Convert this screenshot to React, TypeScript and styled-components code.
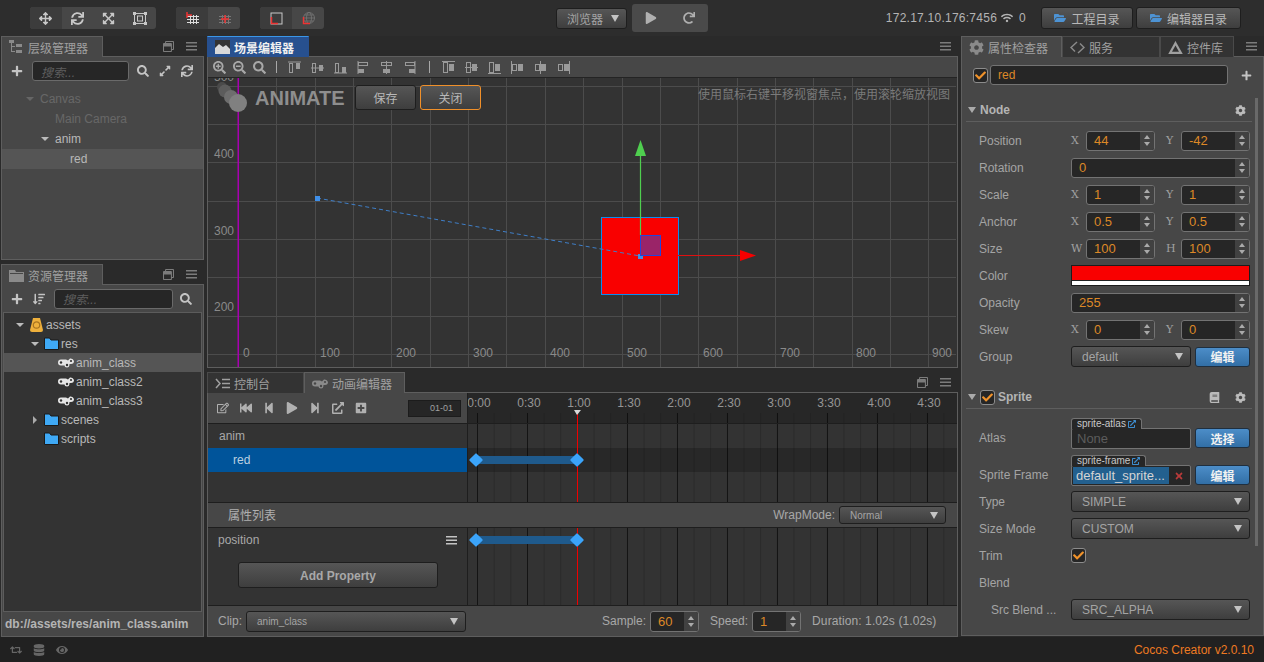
import React from 'react';
import styled, { createGlobalStyle, css } from 'styled-components';
import {
  FaArrowsAlt, FaSync, FaExpandArrowsAlt, FaPlus, FaSearch, FaSearchPlus, FaSearchMinus, FaExpandAlt, FaCog, FaFolderOpen,
  FaWifi, FaPlay, FaStepBackward, FaFastBackward, FaStepForward, FaRegEdit, FaExternalLinkAlt,
  FaPlusSquare, FaBook, FaTimes, FaRedo, FaEye, FaDatabase, FaRetweet, FaCheck, FaRegWindowRestore,
  FaSortAmountDown,
} from 'react-icons/fa';

const GlobalStyle = createGlobalStyle`
  html, body { margin: 0; padding: 0; background: #232323; overflow: hidden; }
  * { box-sizing: border-box; }
  body { font-family: "Liberation Sans", "Noto Sans CJK SC", sans-serif; font-size: 12px; color: #a8a8a8; }
`;

// Overall frame
const Page = styled.div`
  width: 1264px;
  height: 662px;
  display: flex;
  flex-direction: column;
  background: #2a2a2a;
`;

const TopBar = styled.div`
  height: 36px;
  display: flex;
  align-items: center;
  padding: 0 23px 0 30px;
  background: #2d2d2d;
`;

const ToolGroup = styled.div<{ $ml?: number }>`
  display: flex;
  height: 22px;
  margin-left: ${(p) => p.$ml || 0}px;
  border-radius: 3px;
  overflow: hidden;
  background: #474747;
`;

const ToolButton = styled.div<{ $dim?: boolean; $w?: number }>`
  width: ${(p) => p.$w || 32}px;
  display: flex;
  align-items: center;
  justify-content: center;
  color: #c8c8c8;
  font-size: 13px;
  background: ${(p) => (p.$dim ? '#3c3c3c' : 'transparent')};
`;

const PlayGroup = styled.div`
  width: 76px;
  height: 28px;
  margin-left: 5px;
  display: flex;
  border-radius: 3px;
  background: #4a4a4a;
`;

const PlayButton = styled.div`
  width: 38px;
  display: flex;
  align-items: center;
  justify-content: center;
  color: #b0b0b0;
  font-size: 12px;
`;

const IpText = styled.div`
  margin-left: auto;
  display: flex;
  align-items: center;
  gap: 4px;
  color: #b4b4b4;
  font-size: 12px;
  letter-spacing: 0.25px;
  svg { font-size: 12px; }
`;

const ConnCount = styled.span`
  margin-left: 2px;
`;

const GradientButton = styled.div<{ $w?: number; $h?: number; $ml?: number }>`
  ${(p) => p.$w && `width: ${p.$w}px;`}
  height: ${(p) => p.$h || 22}px;
  ${(p) => p.$ml && `margin-left: ${p.$ml}px;`}
  display: flex;
  flex-shrink: 0;
  align-items: center;
  justify-content: center;
  gap: 5px;
  border: 1px solid #1e1e1e;
  border-radius: 3px;
  color: #b8b8b8;
  background: linear-gradient(#565656, #3e3e3e);
`;

const BlueButton = styled(GradientButton)`
  color: #f2f2f2;
  font-weight: bold;
  background: linear-gradient(#4c8dc8, #326fa6);
  border-color: #1f2f3f;
`;

const Workspace = styled.div`
  flex: 1;
  display: flex;
  min-height: 0;
`;

const LeftColumn = styled.div`
  width: 204px;
  padding-left: 1px;
  display: flex;
  flex-direction: column;
  gap: 4px;
`;

const CenterColumn = styled.div`
  width: 751px;
  margin-left: 3px;
  display: flex;
  flex-direction: column;
  gap: 4px;
`;

const RightColumn = styled.div`
  width: 303px;
  margin-left: 3px;
  padding-bottom: 1px;
  display: flex;
  flex-direction: column;
`;

const Dock = styled.div<{ $h?: number }>`
  ${(p) => (p.$h ? `height: ${p.$h}px;` : 'flex: 1;')}
  display: flex;
  flex-direction: column;
  min-height: 0;
`;

const TabStrip = styled.div`
  height: 20px;
  display: flex;
  align-items: flex-end;
  flex-shrink: 0;
`;

const Tab = styled.div<{ $w: number; $kind?: 'active' | 'focus' | 'idle' }>`
  width: ${(p) => p.$w}px;
  height: 21px;
  display: flex;
  align-items: center;
  gap: 4px;
  padding-left: 7px;
  border: 1px solid #5e5e5e;
  border-bottom: none;
  font-size: 12px;
  color: #a0a0a0;
  background: #474747;
  margin-bottom: -1px;
  position: relative;
  z-index: 1;
  ${(p) =>
    p.$kind === 'focus' &&
    css`
      background: #27508f;
      color: #f0f0f0;
      font-weight: bold;
      border-color: #27508f;
      border-top: 1px solid #3a96e8;
    `}
  ${(p) =>
    p.$kind === 'idle' &&
    css`
      background: #333333;
      color: #a0a0a0;
      border-color: #4a4a4a;
    `}
`;

const TabActions = styled.div`
  margin-left: auto;
  height: 20px;
  display: flex;
  align-items: center;
  gap: 12px;
  padding-right: 7px;
  color: #7c7c7c;
  font-size: 11px;
`;

const Panel = styled.div`
  flex: 1;
  min-height: 0;
  display: flex;
  flex-direction: column;
  border: 1px solid #5e5e5e;
  background: #474747;
  position: relative;
`;

const PanelToolbar = styled.div<{ $h: number }>`
  height: ${(p) => p.$h}px;
  flex-shrink: 0;
  display: flex;
  align-items: center;
  padding-left: 9px;
  color: #c4c4c4;
  font-size: 12px;
`;

const SearchBox = styled.div<{ $w: number; $ml: number }>`
  width: ${(p) => p.$w}px;
  height: 20px;
  margin-left: ${(p) => p.$ml}px;
  margin-right: 8px;
  padding-left: 8px;
  display: flex;
  align-items: center;
  border: 1px solid #6a6a6a;
  border-radius: 3px;
  background: #262626;
  color: #5e5e5e;
  font-style: italic;
`;

const IconGap = styled.div<{ $w: number; $ml?: number }>`
  width: ${(p) => p.$w}px;
  margin-left: ${(p) => p.$ml || 0}px;
  display: flex;
  justify-content: center;
  flex-shrink: 0;
`;

// Trees
const TreeList = styled.div<{ $pt: number }>`
  flex: 1;
  padding-top: ${(p) => p.$pt}px;
`;

const AssetBox = styled(TreeList)`
  margin: 0 1px;
  border: 1px solid #5c5c5c;
  background: #333333;
`;

const TreeRow = styled.div<{ $h: number; $pad: number; $sel?: boolean; $dim?: boolean }>`
  height: ${(p) => p.$h}px;
  padding-left: ${(p) => p.$pad}px;
  display: flex;
  align-items: center;
  white-space: nowrap;
  color: ${(p) => (p.$dim ? '#676767' : '#b8b8b8')};
  background: ${(p) => (p.$sel ? '#555555' : 'transparent')};
`;

const CaretSlot = styled.span`
  width: 10px;
  flex-shrink: 0;
  display: flex;
  justify-content: center;
`;

const CaretLabel = styled.span`
  margin-left: 5px;
`;

const Caret = styled.span<{ $open?: boolean; $dim?: boolean }>`
  display: block;
  ${(p) =>
    p.$open
      ? `border-left: 4px solid transparent; border-right: 4px solid transparent; border-top: 4px solid ${p.$dim ? '#666' : '#bbb'};`
      : `border-top: 4px solid transparent; border-bottom: 4px solid transparent; border-left: 4px solid #aaa;`}
`;

const IconSlot = styled.span`
  width: 21px;
  height: 16px;
  flex-shrink: 0;
  display: flex;
  align-items: center;
  justify-content: flex-end;
  padding-right: 2px;
`;

const PathBar = styled.div`
  height: 24px;
  padding-left: 3px;
  display: flex;
  align-items: center;
  font-weight: bold;
  color: #b4b4b4;
  flex-shrink: 0;
`;

// Scene editor
const SceneBar = styled.div`
  height: 21px;
  flex-shrink: 0;
  display: flex;
  align-items: center;
  padding-left: 1px;
  border-bottom: 1px solid #242424;
  color: #a8a8a8;
  font-size: 13px;
`;

const SceneTool = styled.div`
  width: 20px;
  display: flex;
  justify-content: center;
`;

const AlignTool = styled.div`
  width: 23px;
  display: flex;
  justify-content: center;
`;

const BarDivider = styled.div<{ $ml: number; $mr: number }>`
  width: 1px;
  height: 12px;
  margin: 0 ${(p) => p.$mr}px 0 ${(p) => p.$ml}px;
  background: #a8a8a8;
`;

const SceneView = styled.div`
  flex: 1;
  position: relative;
  overflow: hidden;
  background: #333333;
  svg { display: block; }
`;

const AnimateOverlay = styled.div`
  position: absolute;
  left: 47px;
  top: 7px;
  display: flex;
  align-items: center;
`;

const AnimateTitle = styled.div`
  font-size: 20px;
  font-weight: bold;
  color: #8e8e8e;
  width: 100px;
  padding-top: 2px;
`;

const OverlayButton = styled(GradientButton)<{ $orange?: boolean }>`
  width: 61px;
  height: 25px;
  margin-right: 4px;
  font-size: 12px;
  ${(p) => p.$orange && 'border-color: #f0902a;'}
`;

const SceneHint = styled.div`
  position: absolute;
  right: 7px;
  top: 7px;
  color: #7a7a7a;
  font-size: 12px;
`;

// Animation editor
const TrackBlock = styled.div<{ $h: number }>`
  height: ${(p) => p.$h}px;
  flex-shrink: 0;
  display: flex;
  border-bottom: 1px solid #1e1e1e;
`;

const TrackSide = styled.div`
  width: 260px;
  flex-shrink: 0;
  display: flex;
  flex-direction: column;
  background: #333333;
  border-right: 1px solid #1e1e1e;
`;

const AnimBar = styled.div`
  height: 31px;
  flex-shrink: 0;
  display: flex;
  align-items: center;
  padding-left: 3px;
  background: #474747;
  border-bottom: 1px solid #1e1e1e;
  color: #b0b0b0;
  font-size: 12px;
`;

const AnimTool = styled.div`
  width: 23px;
  display: flex;
  justify-content: center;
`;

const FrameBox = styled.div`
  width: 53px;
  height: 17px;
  margin-left: 36px;
  padding-right: 7px;
  display: flex;
  align-items: center;
  justify-content: flex-end;
  font-size: 9px;
  color: #a0a0a0;
  background: #262626;
  border: 1px solid #1c1c1c;
`;

const NodeRow = styled.div<{ $pad: number; $sel?: boolean }>`
  height: 24px;
  padding-left: ${(p) => p.$pad}px;
  display: flex;
  align-items: center;
  color: ${(p) => (p.$sel ? '#bcd0e0' : '#a8a8a8')};
  background: ${(p) => (p.$sel ? '#00549a' : 'transparent')};
`;

const Timeline = styled.div`
  flex: 1;
  position: relative;
  overflow: hidden;
  display: flex;
  flex-direction: column;
`;

const gridLines = css`
  background-color: #333333;
  background-image: linear-gradient(90deg, #141414 1px, transparent 1px), linear-gradient(90deg, #2a2a2a 1px, transparent 1px);
  background-size: 50px 100%, 16.667px 100%;
  background-position: 9px 0, 9px 0;
`;

const Ruler = styled.div`
  height: 31px;
  flex-shrink: 0;
  background: #272727;
  border-bottom: 1px solid #1e1e1e;
  display: flex;
  flex-direction: column;
`;

const RulerLabels = styled.div`
  height: 20px;
  margin-left: -14px;
  display: flex;
  align-items: center;
`;

const RulerLabel = styled.div`
  width: 50px;
  flex-shrink: 0;
  text-align: center;
  color: #969696;
  font-size: 12px;
`;

const RulerTicks = styled.div`
  flex: 1;
  background-image: linear-gradient(90deg, #101010 1px, transparent 1px), linear-gradient(90deg, #222 1px, transparent 1px);
  background-size: 50px 100%, 16.667px 100%;
  background-position: 9px 0, 9px 0;
`;

const Lane = styled.div`
  flex: 1;
  ${gridLines}
`;

const SelectedLane = styled.div`
  height: 24px;
  margin-top: 24px;
  background: rgba(0, 0, 0, 0.2);
`;

const Playhead = styled.div<{ $top: number }>`
  position: absolute;
  left: 109px;
  top: ${(p) => p.$top}px;
  bottom: 0;
  width: 1px;
  background: #f00000;
`;

const PlayheadCap = styled.div`
  position: absolute;
  left: 106px;
  top: 17px;
  border-left: 3px solid transparent;
  border-right: 4px solid transparent;
  border-top: 5px solid #d8d8d8;
`;

const KeySpan = styled.div<{ $top: number }>`
  position: absolute;
  left: 8px;
  top: ${(p) => p.$top}px;
  width: 101px;
  height: 8px;
  background: #1f5a8c;
`;

const KeyDiamond = styled.div<{ $right?: boolean }>`
  position: absolute;
  top: -1px;
  ${(p) => (p.$right ? 'right: -5px;' : 'left: -5px;')}
  width: 10px;
  height: 10px;
  border-radius: 1px;
  transform: rotate(45deg);
  background: #3ba4fa;
`;

const PropHeader = styled.div`
  height: 25px;
  flex-shrink: 0;
  display: flex;
  align-items: center;
  padding-left: 20px;
  border-bottom: 1px solid #1e1e1e;
  color: #b0b0b0;
`;

const PropTitle = styled.span`
  margin-top: -2px;
`;

const WrapLabel = styled.div`
  margin-left: auto;
  margin-right: 4px;
  color: #a8a8a8;
`;

const Select = styled(GradientButton)<{ $w?: number; $h?: number; $mr?: number; $small?: boolean }>`
  width: ${(p) => p.$w || 179}px;
  height: ${(p) => p.$h || 21}px;
  margin-right: ${(p) => p.$mr || 0}px;
  justify-content: space-between;
  padding: 0 7px 0 10px;
  font-size: ${(p) => (p.$small ? 10 : 12)}px;
  color: #a4a4a4;
  flex-shrink: 0;
`;

const DropArrow = styled.span`
  border-left: 4px solid transparent;
  border-right: 4px solid transparent;
  border-top: 7px solid #c4c4c4;
`;

const PropRow = styled.div`
  height: 24px;
  padding: 0 10px 0 10px;
  display: flex;
  align-items: center;
  justify-content: space-between;
  color: #a8a8a8;
  svg { color: #c4c4c4; }
`;

const AddButton = styled(GradientButton)`
  width: 200px;
  height: 26px;
  margin: 10px 0 0 30px;
  padding-top: 2px;
  font-weight: bold;
  color: #a8a8a8;
`;

const AnimFooter = styled.div`
  flex: 1;
  display: flex;
  align-items: center;
  padding-left: 10px;
  color: #a8a8a8;
`;

const FooterGroup = styled.div<{ $ml: number }>`
  margin-left: ${(p) => p.$ml}px;
  display: flex;
  align-items: center;
  gap: 4px;
`;

const DurationText = styled(FooterGroup)`
  letter-spacing: 0.1px;
`;

const NumberBox = styled.div<{ $w: number; $h?: number }>`
  width: ${(p) => p.$w}px;
  height: ${(p) => p.$h || 20}px;
  flex-shrink: 0;
  display: flex;
  border: 1px solid #737373;
  border-radius: 3px;
  background: #262626;
  overflow: hidden;
`;

const NumberValue = styled.div`
  flex: 1;
  padding-left: 7px;
  display: flex;
  align-items: center;
  font-size: 13px;
  color: #dd8826;
`;

const Spinner = styled.div`
  width: 14px;
  display: flex;
  flex-direction: column;
  justify-content: center;
  align-items: center;
  gap: 3px;
  background: #414141;
`;

const SpinUp = styled.span`
  border-left: 3px solid transparent;
  border-right: 3px solid transparent;
  border-bottom: 4px solid #aaa;
`;

const SpinDown = styled.span`
  border-left: 3px solid transparent;
  border-right: 3px solid transparent;
  border-top: 4px solid #aaa;
`;

// Inspector
const NameRow = styled.div`
  height: 38px;
  flex-shrink: 0;
  display: flex;
  align-items: center;
  padding-left: 11px;
  padding-bottom: 2px;
`;

const CheckBox = styled.div<{ $mr?: number }>`
  width: 15px;
  height: 15px;
  margin-right: ${(p) => p.$mr || 0}px;
  flex-shrink: 0;
  display: flex;
  align-items: center;
  justify-content: center;
  border: 1px solid #8c8c8c;
  border-radius: 3px;
  background: #262626;
  color: #f0922a;
  font-size: 11px;
`;

const NameInput = styled.div`
  width: 238px;
  height: 20px;
  margin-left: 2px;
  padding-left: 7px;
  display: flex;
  align-items: center;
  border: 1px solid #737373;
  border-radius: 3px;
  background: #262626;
  color: #dd8826;
  font-size: 12px;
`;

const NamePlus = styled.div`
  margin-left: 13px;
  color: #c4c4c4;
  font-size: 11px;
  display: flex;
`;

const SectionHead = styled.div<{ $mt: number }>`
  height: 25px;
  margin: ${(p) => p.$mt}px 11px 0 4px;
  padding: 2px 6px 0 0;
  display: flex;
  align-items: center;
  border-bottom: 1px solid #5e5e5e;
  font-weight: bold;
  color: #b4b4b4;
  flex-shrink: 0;
`;

const HeadIcons = styled.div`
  margin-left: auto;
  display: flex;
  align-items: center;
  gap: 15px;
  color: #bbbbbb;
  font-size: 11px;
`;

const HeadCaret = styled.span`
  margin: 0 4px 0 2px;
  border-left: 4px solid transparent;
  border-right: 4px solid transparent;
  border-top: 6px solid #aaa;
`;

const SectionBody = styled.div<{ $mt: number }>`
  margin-top: ${(p) => p.$mt}px;
  flex-shrink: 0;
`;

const PropLine = styled.div<{ $tall?: boolean }>`
  height: ${(p) => (p.$tall ? 37 : 27)}px;
  padding-left: 17px;
  display: flex;
  align-items: ${(p) => (p.$tall ? 'flex-end' : 'center')};
`;

const PropLabel = styled.div<{ $indent?: boolean; $tall?: boolean }>`
  width: 92px;
  flex-shrink: 0;
  color: #a4a4a4;
  white-space: nowrap;
  ${(p) => p.$indent && 'padding-left: 12px;'}
  ${(p) => p.$tall && 'height: 21px; line-height: 21px;'}
`;

const Axis = styled.div`
  width: 15px;
  flex-shrink: 0;
  font-family: "DejaVu Serif", serif;
  font-size: 11px;
  color: #a0a0a0;
`;

const AxisGap = styled.div`
  width: 11px;
  flex-shrink: 0;
`;

const ColorBar = styled.div`
  width: 179px;
  height: 21px;
  display: flex;
  flex-direction: column;
  border: 1px solid #1c1c1c;
  background: #f90000;
`;

const ColorAlpha = styled.div`
  margin-top: auto;
  height: 5px;
  background: #ffffff;
  border-top: 1px solid #222;
`;

const SideButton = styled(BlueButton)<{ $raise?: boolean }>`
  width: 55px;
  height: 20px;
  margin-left: 4px;
  ${(p) => p.$raise && 'margin-bottom: 1px;'}
`;

const AssetField = styled.div`
  width: 120px;
  height: 21px;
  position: relative;
  flex-shrink: 0;
  display: flex;
  align-items: center;
  padding: 1px;
  border: 1px solid #737373;
  border-radius: 2px;
  background: #262626;
  color: #5c5c5c;
  font-size: 13px;
`;

const AssetNone = styled.span`
  padding-left: 4px;
`;

const AssetTag = styled.div`
  position: absolute;
  left: -1px;
  top: -11px;
  height: 11px;
  padding: 0 5px 0 5px;
  display: flex;
  align-items: center;
  gap: 2px;
  line-height: 10px;
  border: 1px solid #737373;
  border-bottom: none;
  border-radius: 3px 3px 0 0;
  background: #262626;
  color: #c8c8c8;
  font-size: 10px;
  svg { color: #3e8ed0; font-size: 8px; }
`;

const AssetValue = styled.div`
  width: 96px;
  height: 100%;
  padding-left: 3px;
  display: flex;
  align-items: center;
  background: #23608f;
  color: #d4d4d4;
  font-size: 13px;
  white-space: nowrap;
  overflow: hidden;
`;

const AssetClear = styled.div`
  flex: 1;
  display: flex;
  justify-content: center;
  color: #b83a3a;
  font-size: 10px;
`;

const ScrollThumb = styled.div`
  position: absolute;
  right: 5px;
  top: 41px;
  width: 3px;
  height: 448px;
  background: #696969;
`;

const StatusBar = styled.div`
  height: 25px;
  flex-shrink: 0;
  display: flex;
  align-items: center;
  padding: 0 10px;
  gap: 11px;
  color: #666666;
  font-size: 12px;
  background: #212121;
`;

const VersionText = styled.div`
  margin-left: auto;
  color: #ee7a22;
  font-size: 12px;
`;

const FolderBtnIcon = styled.span`
  color: #4d93d4;
  display: flex;
  font-size: 12px;
`;

// Drawn icons
const AnimIcon = ({ c = '#e6e6e6', hole = '#333' }: { c?: string; hole?: string }) => (
  <svg width="16" height="11" viewBox="0 0 16 11">
    <path d="M0 5.5 Q0 2.5 3 2.5 H8 L10 3.5 L12 1.5 Q15 1 16 4 Q16 7 13 7 L11.5 7 Q11.5 10.5 9 10.5 Q6.5 10.5 6.5 8.5 H3 Q0 8.5 0 5.5Z" fill={c} />
    <circle cx="3" cy="5.5" r="1.2" fill={hole} />
    <circle cx="9" cy="8" r="1.2" fill={hole} />
    <circle cx="13" cy="4" r="1.1" fill={hole} />
  </svg>
);

const FolderIcon = () => (
  <svg width="15" height="13" viewBox="0 0 15 13">
    <path d="M0.5 1 H5.5 L7 3 H14.5 V12.5 H0.5Z" fill="#3fa9f5" stroke="#1a1a1a" strokeWidth="1" />
  </svg>
);

const AssetsIcon = () => (
  <svg width="15" height="16" viewBox="0 0 15 16">
    <path d="M4 1 H11 L14 13 Q14 15 12 15 H3 Q1 15 1 13Z" fill="#eeb03c" />
    <circle cx="7.5" cy="8" r="3.2" fill="none" stroke="#a87420" strokeWidth="1.2" />
  </svg>
);

const HierarchyIcon = () => (
  <svg width="15" height="14" viewBox="0 0 15 14" fill="#8a8a8a">
    <rect x="0" y="0" width="5" height="3" />
    <rect x="2" y="3" width="1" height="9" />
    <rect x="3" y="6" width="3" height="1" />
    <rect x="3" y="11" width="3" height="1" />
    <rect x="7" y="4" width="6" height="3" />
    <rect x="7" y="10" width="6" height="3" />
  </svg>
);

const PanelFolderIcon = () => (
  <svg width="15" height="13" viewBox="0 0 15 13" fill="#8a8a8a">
    <path d="M0 1 H6 L7 3 H15 V13 H0Z" />
    <rect x="1" y="4" width="13" height="1" fill="#474747" />
  </svg>
);

const SceneIcon = () => (
  <svg width="15" height="14" viewBox="0 0 15 14">
    <rect x="0" y="0" width="15" height="14" fill="#333" />
    <path d="M0 14 V8 L4 4 L8 7 L11 5 L15 9 V14Z" fill="#d8d8d8" />
  </svg>
);

const ServiceIcon = () => (
  <svg width="15" height="13" viewBox="0 0 15 13" fill="none" stroke="#8a8a8a" strokeWidth="1.5">
    <path d="M7 1 L1 6.5 L5 10.5" />
    <path d="M8 12 L14 6.5 L10 2.5" />
  </svg>
);

const TriangleIcon = () => (
  <svg width="15" height="13" viewBox="0 0 12 12" fill="none" stroke="#a0a0a0" strokeWidth="2">
    <path d="M6 2 L11 11 H1Z" />
  </svg>
);

const ConsoleIcon = () => (
  <svg width="15" height="11" viewBox="0 0 15 11" fill="none" stroke="#a0a0a0" strokeWidth="1.5">
    <path d="M1 1 L5 5.5 L1 10" />
    <path d="M7 1.5 H15 M7 5.5 H15 M7 9.5 H15" />
  </svg>
);

const MenuIcon = ({ c = '#7c7c7c' }: { c?: string }) => (
  <svg width="11" height="9" viewBox="0 0 11 9" fill={c}>
    <rect y="0" width="11" height="1.5" />
    <rect y="3.5" width="11" height="1.5" />
    <rect y="7" width="11" height="1.5" />
  </svg>
);

type Glyph = 'corner' | 'center';

const GridPivot = ({ mark }: { mark: Glyph }) => (
  <svg width="13" height="12" viewBox="0 0 13 12">
    <g stroke={mark === 'corner' ? '#dddddd' : '#777'} strokeWidth="1" fill="none">
      <path d="M1 4.5 H13 M1 7.5 H13 M1 10.5 H13 M4.5 3 V12 M7.5 3 V12 M10.5 3 V12" />
    </g>
    {mark === 'corner' ? (
      <path d="M1 0 V6 M1 3 H6" stroke="#e33" strokeWidth="1.5" fill="none" />
    ) : (
      <path d="M7 3 V11 M3 7 H11" stroke="#e33" strokeWidth="1.5" fill="none" />
    )}
  </svg>
);

const SpacePivot = ({ globe }: { globe?: boolean }) => (
  <svg width="13" height="13" viewBox="0 0 13 13" fill="none">
    {globe ? (
      <g stroke="#777" strokeWidth="0.8">
        <circle cx="7" cy="6" r="5.5" />
        <ellipse cx="7" cy="6" rx="2.5" ry="5.5" />
        <path d="M1.5 6 H12.5 M2.5 3 H11.5 M2.5 9 H11.5" />
      </g>
    ) : (
      <rect x="1" y="1" width="11" height="11" stroke="#c8c8c8" />
    )}
    <path d="M1.5 5 V11.5 H8" stroke="#ee3333" strokeWidth="1.5" />
  </svg>
);

const RectTool = () => (
  <svg width="14" height="13" viewBox="0 0 14 13" fill="none" stroke="#c8c8c8">
    <rect x="1.5" y="1.5" width="11" height="10" />
    <rect x="4.5" y="4" width="5" height="5" />
    <rect x="0" y="0" width="3" height="3" fill="#c8c8c8" stroke="none" />
    <rect x="11" y="0" width="3" height="3" fill="#c8c8c8" stroke="none" />
    <rect x="0" y="10" width="3" height="3" fill="#c8c8c8" stroke="none" />
    <rect x="11" y="10" width="3" height="3" fill="#c8c8c8" stroke="none" />
  </svg>
);

type AlignKind = 'top' | 'vmid' | 'bottom' | 'left' | 'hmid' | 'right';

const ALIGN_SPEC: Record<AlignKind, { line: string; a: number[]; b: number[] }> = {
  top: { line: 'M0 1 H13', a: [1, 2, 4, 10], b: [8, 2, 4, 6] },
  vmid: { line: 'M0 7 H13', a: [1, 2, 4, 10], b: [8, 4, 4, 6] },
  bottom: { line: 'M0 12 H13', a: [1, 2, 4, 10], b: [8, 6, 4, 6] },
  left: { line: 'M1 0 V13', a: [1, 1, 10, 4], b: [1, 8, 6, 4] },
  hmid: { line: 'M6.5 0 V13', a: [1, 1, 11, 4], b: [3, 8, 7, 4] },
  right: { line: 'M12 0 V13', a: [2, 1, 10, 4], b: [6, 8, 6, 4] },
};

const AlignIcon = ({ kind }: { kind: AlignKind }) => {
  const s = ALIGN_SPEC[kind];
  return (
    <svg width="13" height="13" viewBox="0 0 13 13" fill="none" stroke="#9a9a9a">
      <path d={s.line} />
      <rect x={s.a[0] + 0.5} y={s.a[1] + 0.5} width={s.a[2] - 1} height={s.a[3] - 1} />
      <rect x={s.b[0]} y={s.b[1]} width={s.b[2]} height={s.b[3]} fill="#9a9a9a" stroke="none" />
    </svg>
  );
};

// second row of the scene toolbar: distribution, a bar split by a guide
const DistributeIcon = ({ vertical, at }: { vertical?: boolean; at: number }) => (
  <svg width="13" height="13" viewBox="0 0 13 13" fill="none" stroke="#9a9a9a">
    {vertical ? (
      <>
        <path d={`M0 ${at}.5 H13`} />
        <rect x="1.5" y="1.5" width="4" height="10" />
        <rect x="7.5" y="3.5" width="4" height="6" fill="#9a9a9a" />
      </>
    ) : (
      <>
        <path d={`M${at}.5 0 V13`} />
        <rect x="1.5" y="3.5" width="4" height="6" />
        <rect x="7.5" y="3.5" width="4" height="6" fill="#9a9a9a" />
      </>
    )}
  </svg>
);

// Scene drawing, in page coordinates
const GRID_X = Array.from({ length: 20 }, (_, i) => 238 + i * 38.35);
const GRID_Y = Array.from({ length: 8 }, (_, i) => 85.7 + i * 38.3);
const X_LABELS = [[243, '0'], [320, '100'], [396, '200'], [473, '300'], [550, '400'], [627, '500'], [703, '600'], [780, '700'], [856, '800'], [932, '900']] as const;
const Y_LABELS = [[81, '500'], [158, '400'], [235, '300'], [311, '200']] as const;

const SceneDrawing = () => (
  <svg width="748" height="289" viewBox="208 78 748 289">
    {GRID_X.map((x) => (
      <line key={x} x1={Math.round(x) + 0.5} x2={Math.round(x) + 0.5} y1="78" y2="367" stroke="#4c4c4c" />
    ))}
    {GRID_Y.map((y) => (
      <line key={y} y1={Math.round(y) + 0.5} y2={Math.round(y) + 0.5} x1="208" x2="956" stroke="#4c4c4c" />
    ))}
    <rect x="237.5" y="78" width="1.5" height="289" fill="#a800b0" />
    <g fill="#8a8a8a" fontSize="12" fontFamily="Liberation Sans">
      {X_LABELS.map(([x, t]) => (
        <text key={t} x={x} y="357">{t}</text>
      ))}
      {Y_LABELS.map(([y, t]) => (
        <text key={t} x="214" y={y}>{t}</text>
      ))}
    </g>
    <circle cx="222" cy="87" r="5" fill="#4a4a4a" />
    <circle cx="225" cy="91" r="6.5" fill="#5c5c5c" />
    <circle cx="231" cy="97" r="7" fill="#6e6e6e" />
    <circle cx="238" cy="103" r="9" fill="#808080" />
    <rect x="601.5" y="217.5" width="77" height="77" fill="#f90000" stroke="#0a8cf0" />
    <line x1="317" y1="198" x2="640" y2="256" stroke="#3f7fc8" strokeDasharray="4 3" />
    <rect x="315" y="196" width="5" height="5" fill="#3f8fe8" />
    <rect x="638" y="254" width="5" height="5" fill="#3f8fe8" />
    <rect x="640.5" y="235.5" width="20" height="20" fill="#9a2468" stroke="#2244dd" />
    <line x1="640.5" y1="155" x2="640.5" y2="235" stroke="#4fcf4f" strokeWidth="1.2" />
    <polygon points="640.5,140 635,156 646,156" fill="#4fcf4f" />
    <line x1="678" y1="255.5" x2="741" y2="255.5" stroke="#e01010" />
    <polygon points="756,255.5 740,250 740,261" fill="#f80000" />
  </svg>
);

const ALIGN_KINDS: AlignKind[] = ['top', 'vmid', 'bottom', 'left', 'hmid', 'right'];
const DISTRIBUTE: { vertical?: boolean; at: number }[] = [
  { vertical: true, at: 0 },
  { vertical: true, at: 6 },
  { vertical: true, at: 12 },
  { at: 0 },
  { at: 6 },
  { at: 12 },
];
const TIME_LABELS = ['0:00', '0:30', '1:00', '1:30', '2:00', '2:30', '3:00', '3:30', '4:00', '4:30', '5:00'];

const NumberField = ({ value, w, h }: { value: string; w: number; h?: number }) => (
  <NumberBox $w={w} $h={h}>
    <NumberValue>{value}</NumberValue>
    <Spinner>
      <SpinUp />
      <SpinDown />
    </Spinner>
  </NumberBox>
);

const PairLine = ({ label, a, b, x = 'X', y = 'Y' }: { label: string; a: string; b: string; x?: string; y?: string }) => (
  <PropLine>
    <PropLabel>{label}</PropLabel>
    <Axis>{x}</Axis>
    <NumberField value={a} w={69} />
    <AxisGap />
    <Axis>{y}</Axis>
    <NumberField value={b} w={69} />
  </PropLine>
);

const SelectLine = ({ label, value, indent }: { label: string; value: string; indent?: boolean }) => (
  <PropLine>
    <PropLabel $indent={indent}>{label}</PropLabel>
    <Select>
      {value}
      <DropArrow />
    </Select>
  </PropLine>
);

const PanelMenu = () => (
  <TabActions>
    <FaRegWindowRestore />
    <MenuIcon />
  </TabActions>
);

const App: React.FC = () => {
  return (
    <Page>
      <GlobalStyle />
      <TopBar>
        <ToolGroup>
          <ToolButton $dim $w={31.5}><FaArrowsAlt /></ToolButton>
          <ToolButton $w={31.5}><FaSync /></ToolButton>
          <ToolButton $w={31.5}><FaExpandArrowsAlt /></ToolButton>
          <ToolButton $w={31.5}><RectTool /></ToolButton>
        </ToolGroup>
        <ToolGroup $ml={20}>
          <ToolButton $dim><GridPivot mark="corner" /></ToolButton>
          <ToolButton><GridPivot mark="center" /></ToolButton>
        </ToolGroup>
        <ToolGroup $ml={20}>
          <ToolButton $dim><SpacePivot /></ToolButton>
          <ToolButton><SpacePivot globe /></ToolButton>
        </ToolGroup>
        <Select $w={71} $h={21} $ml={232}>
          浏览器
          <DropArrow />
        </Select>
        <PlayGroup>
          <PlayButton><FaPlay /></PlayButton>
          <PlayButton><FaRedo /></PlayButton>
        </PlayGroup>
        <IpText>
          172.17.10.176:7456 <FaWifi /> <ConnCount>0</ConnCount>
        </IpText>
        <GradientButton $w={92} $ml={15}>
          <FolderBtnIcon><FaFolderOpen /></FolderBtnIcon>工程目录
        </GradientButton>
        <GradientButton $w={105} $ml={3}>
          <FolderBtnIcon><FaFolderOpen /></FolderBtnIcon>编辑器目录
        </GradientButton>
      </TopBar>

      <Workspace>
        <LeftColumn>
          <Dock $h={224}>
            <TabStrip>
              <Tab $w={102} $kind="active"><HierarchyIcon />层级管理器</Tab>
              <PanelMenu />
            </TabStrip>
            <Panel>
              <PanelToolbar $h={28}>
                <FaPlus />
                <SearchBox $w={97} $ml={9}>搜索...</SearchBox>
                <IconGap $w={12}><FaSearch /></IconGap>
                <IconGap $w={32}><FaExpandAlt /></IconGap>
                <IconGap $w={12}><FaSync /></IconGap>
              </PanelToolbar>
              <TreeList $pt={4}>
                <TreeRow $h={20} $pad={23} $dim><CaretSlot><Caret $open $dim /></CaretSlot><CaretLabel>Canvas</CaretLabel></TreeRow>
                <TreeRow $h={20} $pad={53} $dim>Main Camera</TreeRow>
                <TreeRow $h={20} $pad={38}><CaretSlot><Caret $open /></CaretSlot><CaretLabel>anim</CaretLabel></TreeRow>
                <TreeRow $h={20} $pad={68} $sel>red</TreeRow>
              </TreeList>
            </Panel>
          </Dock>
          <Dock>
            <TabStrip>
              <Tab $w={102} $kind="active"><PanelFolderIcon />资源管理器</Tab>
              <PanelMenu />
            </TabStrip>
            <Panel>
              <PanelToolbar $h={27}>
                <FaPlus />
                <IconGap $w={32}><FaSortAmountDown /></IconGap>
                <SearchBox $w={119} $ml={-1}>搜索...</SearchBox>
                <IconGap $w={12} $ml={-1}><FaSearch /></IconGap>
              </PanelToolbar>
              <AssetBox $pt={2}>
                <TreeRow $h={19} $pad={11}><CaretSlot><Caret $open /></CaretSlot><IconSlot><AssetsIcon /></IconSlot>assets</TreeRow>
                <TreeRow $h={19} $pad={26}><CaretSlot><Caret $open /></CaretSlot><IconSlot><FolderIcon /></IconSlot>res</TreeRow>
                <TreeRow $h={19} $pad={41} $sel><CaretSlot /><IconSlot><AnimIcon /></IconSlot>anim_class</TreeRow>
                <TreeRow $h={19} $pad={41}><CaretSlot /><IconSlot><AnimIcon /></IconSlot>anim_class2</TreeRow>
                <TreeRow $h={19} $pad={41}><CaretSlot /><IconSlot><AnimIcon /></IconSlot>anim_class3</TreeRow>
                <TreeRow $h={19} $pad={26}><CaretSlot><Caret /></CaretSlot><IconSlot><FolderIcon /></IconSlot>scenes</TreeRow>
                <TreeRow $h={19} $pad={26}><CaretSlot /><IconSlot><FolderIcon /></IconSlot>scripts</TreeRow>
              </AssetBox>
              <PathBar>db://assets/res/anim_class.anim</PathBar>
            </Panel>
          </Dock>
        </LeftColumn>

        <CenterColumn>
          <Dock $h={332}>
            <TabStrip>
              <Tab $w={102} $kind="focus"><SceneIcon />场景编辑器</Tab>
              <TabActions><MenuIcon /></TabActions>
            </TabStrip>
            <Panel>
              <SceneBar>
                <SceneTool><FaSearchPlus /></SceneTool>
                <SceneTool><FaSearchMinus /></SceneTool>
                <SceneTool><FaSearch /></SceneTool>
                <BarDivider $ml={7} $mr={6} />
                {ALIGN_KINDS.map((k) => (
                  <AlignTool key={k}><AlignIcon kind={k} /></AlignTool>
                ))}
                <BarDivider $ml={8} $mr={7} />
                {DISTRIBUTE.map((d) => (
                  <AlignTool key={`${d.vertical}-${d.at}`}><DistributeIcon vertical={d.vertical} at={d.at} /></AlignTool>
                ))}
              </SceneBar>
              <SceneView>
                <SceneDrawing />
                <AnimateOverlay>
                  <AnimateTitle>ANIMATE</AnimateTitle>
                  <OverlayButton>保存</OverlayButton>
                  <OverlayButton $orange>关闭</OverlayButton>
                </AnimateOverlay>
                <SceneHint>使用鼠标右键平移视窗焦点，使用滚轮缩放视图</SceneHint>
              </SceneView>
            </Panel>
          </Dock>
          <Dock>
            <TabStrip>
              <Tab $w={97} $kind="idle"><ConsoleIcon />控制台</Tab>
              <Tab $w={101} $kind="active"><AnimIcon c="#8a8a8a" hole="#474747" />动画编辑器</Tab>
              <PanelMenu />
            </TabStrip>
            <Panel>
              <TrackBlock $h={110}>
                <TrackSide>
                  <AnimBar>
                    <AnimTool><FaRegEdit /></AnimTool>
                    <AnimTool><FaFastBackward /></AnimTool>
                    <AnimTool><FaStepBackward /></AnimTool>
                    <AnimTool><FaPlay /></AnimTool>
                    <AnimTool><FaStepForward /></AnimTool>
                    <AnimTool><FaExternalLinkAlt /></AnimTool>
                    <AnimTool><FaPlusSquare /></AnimTool>
                    <FrameBox>01-01</FrameBox>
                  </AnimBar>
                  <NodeRow $pad={11}>anim</NodeRow>
                  <NodeRow $pad={25} $sel>red</NodeRow>
                </TrackSide>
                <Timeline>
                  <Ruler>
                    <RulerLabels>
                      {TIME_LABELS.map((t) => (
                        <RulerLabel key={t}>{t}</RulerLabel>
                      ))}
                    </RulerLabels>
                    <RulerTicks />
                  </Ruler>
                  <Lane>
                    <SelectedLane />
                  </Lane>
                  <Playhead $top={20} />
                  <PlayheadCap />
                  <KeySpan $top={63}>
                    <KeyDiamond />
                    <KeyDiamond $right />
                  </KeySpan>
                </Timeline>
              </TrackBlock>
              <PropHeader>
                <PropTitle>属性列表</PropTitle>
                <WrapLabel>WrapMode:</WrapLabel>
                <Select $w={107} $h={18} $mr={11} $small>
                  Normal
                  <DropArrow />
                </Select>
              </PropHeader>
              <TrackBlock $h={78}>
                <TrackSide>
                  <PropRow>
                    position
                    <MenuIcon c="#c4c4c4" />
                  </PropRow>
                  <AddButton>Add Property</AddButton>
                </TrackSide>
                <Timeline>
                  <Lane />
                  <Playhead $top={0} />
                  <KeySpan $top={8}>
                    <KeyDiamond />
                    <KeyDiamond $right />
                  </KeySpan>
                </Timeline>
              </TrackBlock>
              <AnimFooter>
                Clip:
                <Select $w={220} $ml={4} $small>
                  anim_class
                  <DropArrow />
                </Select>
                <FooterGroup $ml={136}>
                  Sample:
                  <NumberField value="60" w={49} h={21} />
                </FooterGroup>
                <FooterGroup $ml={11}>
                  Speed:
                  <NumberField value="1" w={49} h={21} />
                </FooterGroup>
                <DurationText $ml={11}>Duration: 1.02s (1.02s)</DurationText>
              </AnimFooter>
            </Panel>
          </Dock>
        </CenterColumn>

        <RightColumn>
          <TabStrip>
            <Tab $w={101} $kind="active"><FaCog color="#8a8a8a" size={15} />属性检查器</Tab>
            <Tab $w={98} $kind="idle"><ServiceIcon />服务</Tab>
            <Tab $w={74} $kind="idle"><TriangleIcon />控件库</Tab>
            <TabActions><MenuIcon /></TabActions>
          </TabStrip>
          <Panel>
            <NameRow>
              <CheckBox><FaCheck /></CheckBox>
              <NameInput>red</NameInput>
              <NamePlus><FaPlus /></NamePlus>
            </NameRow>
            <SectionHead $mt={2}>
              <HeadCaret />
              Node
              <HeadIcons><FaCog /></HeadIcons>
            </SectionHead>
            <SectionBody $mt={5}>
              <PairLine label="Position" a="44" b="-42" />
              <PropLine><PropLabel>Rotation</PropLabel><NumberField value="0" w={179} /></PropLine>
              <PairLine label="Scale" a="1" b="1" />
              <PairLine label="Anchor" a="0.5" b="0.5" />
              <PairLine label="Size" a="100" b="100" x="W" y="H" />
              <PropLine><PropLabel>Color</PropLabel><ColorBar><ColorAlpha /></ColorBar></PropLine>
              <PropLine><PropLabel>Opacity</PropLabel><NumberField value="255" w={179} /></PropLine>
              <PairLine label="Skew" a="0" b="0" />
              <PropLine>
                <PropLabel>Group</PropLabel>
                <Select $w={120}>default<DropArrow /></Select>
                <SideButton>编辑</SideButton>
              </PropLine>
            </SectionBody>
            <SectionHead $mt={14}>
              <HeadCaret />
              <CheckBox $mr={3}><FaCheck /></CheckBox>
              Sprite
              <HeadIcons><FaBook /><FaCog /></HeadIcons>
            </SectionHead>
            <SectionBody $mt={3}>
              <PropLine $tall>
                <PropLabel $tall>Atlas</PropLabel>
                <AssetField>
                  <AssetTag>sprite-atlas <FaExternalLinkAlt /></AssetTag>
                  <AssetNone>None</AssetNone>
                </AssetField>
                <SideButton $raise>选择</SideButton>
              </PropLine>
              <PropLine $tall>
                <PropLabel $tall>Sprite Frame</PropLabel>
                <AssetField>
                  <AssetTag>sprite-frame <FaExternalLinkAlt /></AssetTag>
                  <AssetValue>default_sprite...</AssetValue>
                  <AssetClear><FaTimes /></AssetClear>
                </AssetField>
                <SideButton $raise>编辑</SideButton>
              </PropLine>
            </SectionBody>
            <SectionBody $mt={2}>
              <SelectLine label="Type" value="SIMPLE" />
              <SelectLine label="Size Mode" value="CUSTOM" />
              <PropLine><PropLabel>Trim</PropLabel><CheckBox><FaCheck /></CheckBox></PropLine>
              <PropLine><PropLabel>Blend</PropLabel></PropLine>
              <SelectLine label="Src Blend ..." value="SRC_ALPHA" indent />
            </SectionBody>
            <ScrollThumb />
          </Panel>
        </RightColumn>
      </Workspace>

      <StatusBar>
        <FaRetweet />
        <FaDatabase />
        <FaEye />
        <VersionText>Cocos Creator v2.0.10</VersionText>
      </StatusBar>
    </Page>
  );
};

export default App;
